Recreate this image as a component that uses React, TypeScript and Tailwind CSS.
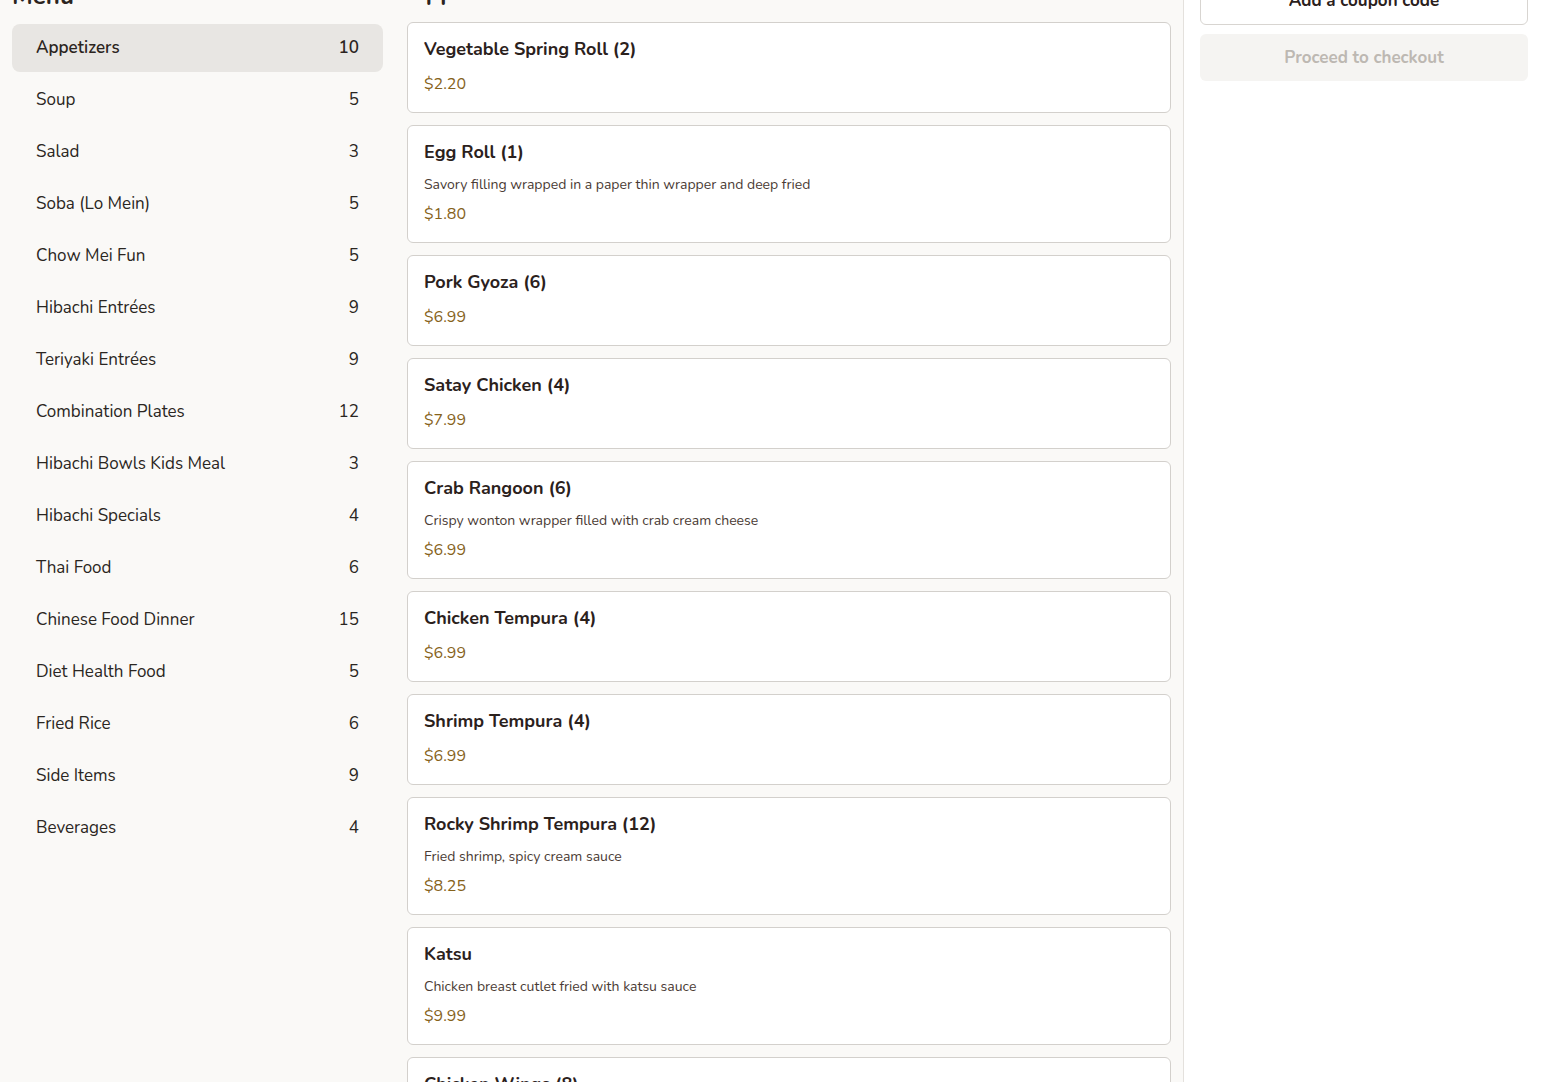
import React from "react";

const categories: [string, number][] = [
  ["Appetizers", 10],
  ["Soup", 5],
  ["Salad", 3],
  ["Soba (Lo Mein)", 5],
  ["Chow Mei Fun", 5],
  ["Hibachi Entrées", 9],
  ["Teriyaki Entrées", 9],
  ["Combination Plates", 12],
  ["Hibachi Bowls Kids Meal", 3],
  ["Hibachi Specials", 4],
  ["Thai Food", 6],
  ["Chinese Food Dinner", 15],
  ["Diet Health Food", 5],
  ["Fried Rice", 6],
  ["Side Items", 9],
  ["Beverages", 4],
];

const items: { name: string; desc?: string; price: string }[] = [
  { name: "Vegetable Spring Roll (2)", price: "$2.20" },
  { name: "Egg Roll (1)", desc: "Savory filling wrapped in a paper thin wrapper and deep fried", price: "$1.80" },
  { name: "Pork Gyoza (6)", price: "$6.99" },
  { name: "Satay Chicken (4)", price: "$7.99" },
  { name: "Crab Rangoon (6)", desc: "Crispy wonton wrapper filled with crab cream cheese", price: "$6.99" },
  { name: "Chicken Tempura (4)", price: "$6.99" },
  { name: "Shrimp Tempura (4)", price: "$6.99" },
  { name: "Rocky Shrimp Tempura (12)", desc: "Fried shrimp, spicy cream sauce", price: "$8.25" },
  { name: "Katsu", desc: "Chicken breast cutlet fried with katsu sauce", price: "$9.99" },
  { name: "Chicken Wings (8)", price: "$7.99" },
];

export default function App() {
  return (
    <div
      className="h-screen overflow-hidden bg-[#faf9f7] text-[#2b2420]"
      style={{ fontFamily: "Nunito, Lato, 'Open Sans', sans-serif" }}
    >
      <div className="-mt-[36px] flex">
        <aside className="w-[395px] shrink-0 px-3 pt-3">
          <h2 className="mt-[4px] mb-[12px] text-2xl font-bold leading-8">Menu</h2>
          <ul className="flex flex-col gap-1">
            {categories.map(([name, count], i) => (
              <li
                key={name}
                className={
                  "flex h-12 items-center justify-between rounded-lg px-6 text-[17px] " +
                  (i === 0 ? "bg-[#e8e6e3] font-semibold text-[#2b2420]" : "text-[#2a2622]")
                }
              >
                <span>{name}</span>
                <span>{count}</span>
              </li>
            ))}
          </ul>
        </aside>
        <main className="w-[788px] shrink-0 px-3 pt-3">
          <h2 className="mb-[14px] pl-[1px] text-2xl font-bold leading-8">Appetizers</h2>
          <div className="flex flex-col gap-3">
            {items.map((it) => (
              <div
                key={it.name}
                className="flex flex-col rounded-md border border-[#d3d0cc] bg-white px-4 py-4"
              >
                <div className="text-[18px] font-bold leading-[21px] text-[#2b211c]">{it.name}</div>
                {it.desc && (
                  <div className="mt-3 text-[14px] leading-5 text-[#4a3b34]">{it.desc}</div>
                )}
                <div className={(it.desc ? "mt-[7px]" : "mt-3") + " text-[16px] leading-6 text-[#86621a]"}>
                  {it.price}
                </div>
              </div>
            ))}
          </div>
        </main>
        <section className="min-h-[1200px] flex-1 border-l border-[#e4e1dd] bg-white px-4 pt-[13px]">
          <button className="flex h-12 w-full items-center justify-center rounded-md border border-[#d8d5d1] bg-white text-[17px] font-bold text-[#2b211c]">
            Add a coupon code
          </button>
          <button className="mt-[9px] flex h-[47px] w-full items-center justify-center rounded-md bg-[#f5f4f2] text-[17px] font-bold text-[#bdb8b2]">
            Proceed to checkout
          </button>
        </section>
      </div>
    </div>
  );
}
